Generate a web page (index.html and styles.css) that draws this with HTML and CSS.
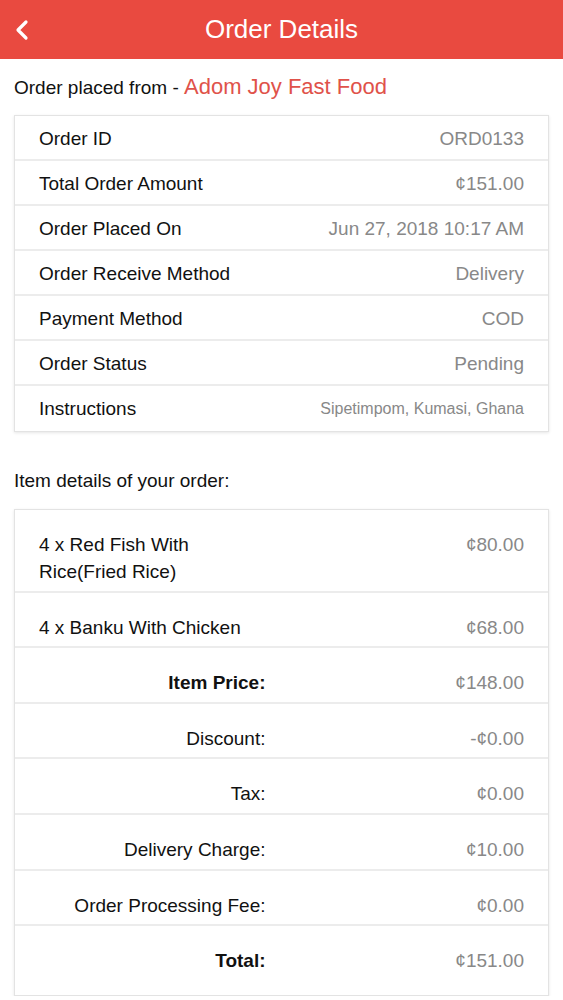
FILE: index.html
```html
<!DOCTYPE html>
<html lang="en">
<head>
<meta charset="utf-8">
<title>Order Details</title>
<link rel="stylesheet" href="styles.css">
</head>
<body>
<header class="topbar">
  <button class="back" aria-label="Back">
    <svg width="16" height="22" viewBox="0 0 16 22"><polyline points="12,3 4,11 12,19" fill="none" stroke="#fff" stroke-width="3.2" stroke-linecap="round" stroke-linejoin="round"/></svg>
  </button>
  <h1 class="title">Order Details</h1>
  <span></span>
</header>

<main class="content">
  <p class="placed">Order placed from - <span class="shop">Adom Joy Fast Food</span></p>

  <section class="card info">
    <div class="row"><span class="label">Order ID</span><span class="value">ORD0133</span></div>
    <div class="row"><span class="label">Total Order Amount</span><span class="value">¢151.00</span></div>
    <div class="row"><span class="label">Order Placed On</span><span class="value">Jun 27, 2018 10:17 AM</span></div>
    <div class="row"><span class="label">Order Receive Method</span><span class="value">Delivery</span></div>
    <div class="row"><span class="label">Payment Method</span><span class="value">COD</span></div>
    <div class="row"><span class="label">Order Status</span><span class="value">Pending</span></div>
    <div class="row"><span class="label">Instructions</span><span class="value small">Sipetimpom, Kumasi, Ghana</span></div>
  </section>

  <p class="section-title">Item details of your order:</p>

  <section class="card items">
    <div class="irow"><span class="name">4 x Red Fish With Rice(Fried Rice)</span><span class="value">¢80.00</span></div>
    <div class="irow"><span class="name">4 x Banku With Chicken</span><span class="value">¢68.00</span></div>
    <div class="irow sum"><span class="slabel bold">Item Price:</span><span class="value">¢148.00</span></div>
    <div class="irow sum"><span class="slabel">Discount:</span><span class="value">-¢0.00</span></div>
    <div class="irow sum"><span class="slabel">Tax:</span><span class="value">¢0.00</span></div>
    <div class="irow sum"><span class="slabel">Delivery Charge:</span><span class="value">¢10.00</span></div>
    <div class="irow sum"><span class="slabel">Order Processing Fee:</span><span class="value">¢0.00</span></div>
    <div class="irow sum last"><span class="slabel bold">Total:</span><span class="value">¢151.00</span></div>
  </section>
</main>
</body>
</html>
```

FILE: styles.css
```css
* { box-sizing: border-box; }
html, body { margin: 0; padding: 0; background: #fff; }
body {
  font-family: "Liberation Sans", Arial, sans-serif;
  color: #111;
  width: 563px;
}
.topbar {
  height: 59px;
  background: #e94a40;
  display: grid;
  grid-template-columns: 48px 1fr 48px;
  align-items: center;
}
.back {
  background: none;
  border: 0;
  padding: 0 0 0 14px;
  height: 59px;
  display: flex;
  align-items: center;
  cursor: pointer;
}
.title {
  margin: 0;
  text-align: center;
  color: #fff;
  font-weight: normal;
  font-size: 26px;
  line-height: 59px;
}
.content {
  padding: 16px 14px 0;
}
.placed {
  margin: 0 0 15px;
  font-size: 19px;
  line-height: 24px;
  white-space: nowrap;
}
.shop {
  color: #e0524a;
  font-size: 22px;
}
.card {
  border: 1px solid #e3e3e3;
  box-shadow: 0 1px 3px rgba(0,0,0,0.10);
  background: #fff;
}
.row {
  display: flex;
  justify-content: space-between;
  align-items: center;
  padding: 12px 24px 9px;
  line-height: 22px;
  font-size: 19px;
  border-bottom: 2px solid #ececec;
}
.row:last-child { border-bottom: 0; padding-bottom: 11px; }
.value {
  color: #888;
  text-align: right;
}
.value.small { font-size: 16px; }
.section-title {
  margin: 37px 0 16px;
  font-size: 19px;
  line-height: 24px;
}
.irow {
  display: grid;
  grid-template-columns: 50% 50%;
  padding: 21px 24px 5.6px;
  font-size: 19px;
  line-height: 27px;
  border-bottom: 2px solid #ececec;
}
.irow .name { padding-right: 16px; }
.irow .slabel { text-align: right; padding-right: 16px; }
.bold { font-weight: bold; }
.irow.last { border-bottom: 0; padding-bottom: 21px; }
```
